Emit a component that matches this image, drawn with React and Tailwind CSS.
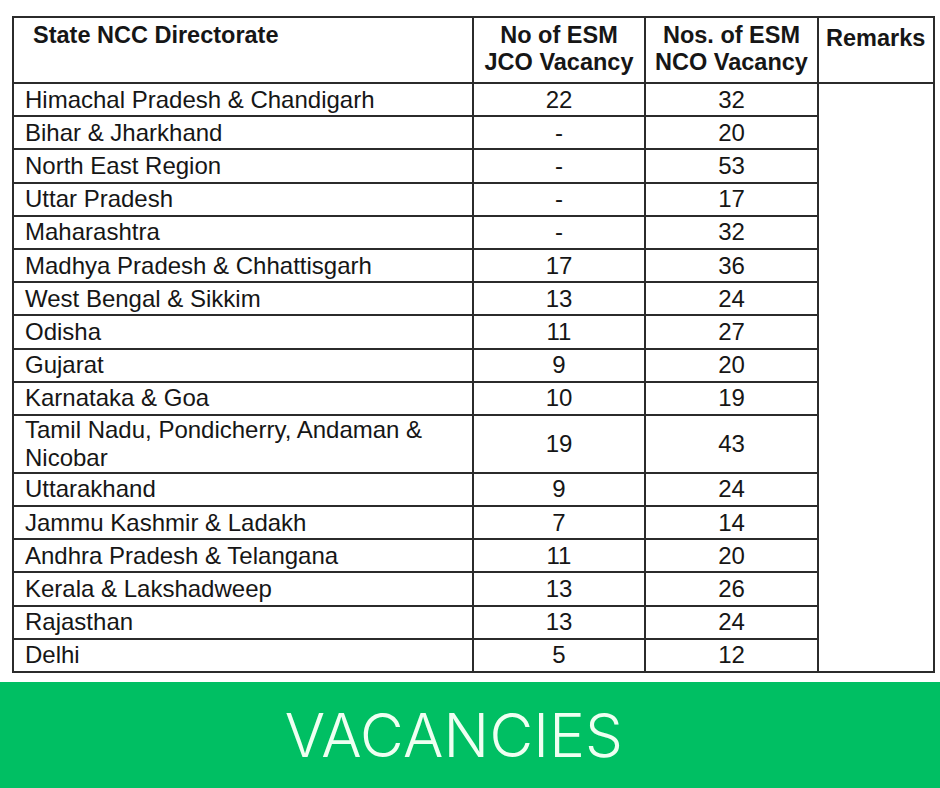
import React from 'react';

const rows = [
  { name: 'Himachal Pradesh & Chandigarh', jco: '22', nco: '32' },
  { name: 'Bihar & Jharkhand', jco: '-', nco: '20' },
  { name: 'North East Region', jco: '-', nco: '53' },
  { name: 'Uttar Pradesh', jco: '-', nco: '17' },
  { name: 'Maharashtra', jco: '-', nco: '32' },
  { name: 'Madhya Pradesh & Chhattisgarh', jco: '17', nco: '36' },
  { name: 'West Bengal & Sikkim', jco: '13', nco: '24' },
  { name: 'Odisha', jco: '11', nco: '27' },
  { name: 'Gujarat', jco: '9', nco: '20' },
  { name: 'Karnataka & Goa', jco: '10', nco: '19' },
  { name: 'Tamil Nadu, Pondicherry, Andaman & Nicobar', jco: '19', nco: '43', tall: true },
  { name: 'Uttarakhand', jco: '9', nco: '24' },
  { name: 'Jammu Kashmir & Ladakh', jco: '7', nco: '14' },
  { name: 'Andhra Pradesh & Telangana', jco: '11', nco: '20' },
  { name: 'Kerala & Lakshadweep', jco: '13', nco: '26' },
  { name: 'Rajasthan', jco: '13', nco: '24' },
  { name: 'Delhi', jco: '5', nco: '12' },
];

const cell = 'border-2 border-[#2b2b2b]';

const VacancyTable = () => {
  return (
    <table className="w-[921px] border-collapse table-fixed text-[#161616] font-['Liberation_Sans',Arial,sans-serif]">
      <colgroup>
        <col className="w-[460px]" />
        <col className="w-[172px]" />
        <col className="w-[173px]" />
        <col className="w-[116px]" />
      </colgroup>
      <thead>
        <tr className="h-[66px] text-[23.5px] leading-[27px] font-bold align-top">
          <th className={`${cell} pl-[19px] pt-[4px] text-left`}>State NCC Directorate</th>
          <th className={`${cell} pt-[4px] text-center`}>
            No of ESM
            <br />
            JCO Vacancy
          </th>
          <th className={`${cell} pt-[4px] text-center`}>
            Nos. of ESM
            <br />
            NCO Vacancy
          </th>
          <th className={`${cell} pl-[7px] pt-[7px] text-left`}>Remarks</th>
        </tr>
      </thead>
      <tbody className="text-[24px] leading-[28px]">
        {rows.map((row, i) => (
          <tr key={row.name} className={row.tall ? 'h-[57px]' : 'h-[33.2px]'}>
            <td className={`${cell} pl-[11px] pr-[30px] align-middle`}>{row.name}</td>
            <td className={`${cell} text-center align-middle`}>{row.jco}</td>
            <td className={`${cell} text-center align-middle`}>{row.nco}</td>
            {i === 0 && <td className={cell} rowSpan={rows.length} />}
          </tr>
        ))}
      </tbody>
    </table>
  );
};

export default function App() {
  return (
    <div className="w-[940px] h-[788px] bg-white flex flex-col overflow-hidden">
      <div className="pl-[12px] pt-[16px] h-[682px]">
        <VacancyTable />
      </div>
      <div className="flex-1 bg-[#00bf63] flex items-center justify-center pr-[32px]">
        <h1 className="text-[60px] font-light text-[#effff2] tracking-[0.2px] leading-none font-['Inter',sans-serif]">
          VACANCIES
        </h1>
      </div>
    </div>
  );
}
